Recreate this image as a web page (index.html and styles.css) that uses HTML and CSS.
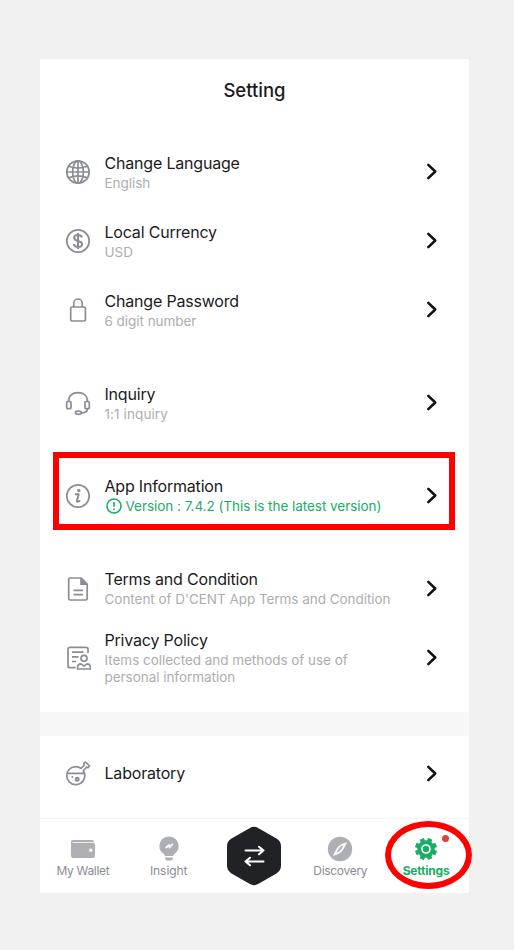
FILE: index.html
```
<!DOCTYPE html>
<html lang="en">
<head>
<meta charset="utf-8">
<title>Setting</title>
<link rel="stylesheet" href="styles.css">
</head>
<body>
<svg class="defs" width="0" height="0">
  <symbol id="chevron" viewBox="0 0 12 18"><path d="M2.300 2.800 9.300 9.500l-7 6.700"/></symbol>
</svg>
<main class="phone">
  <header class="header"><h1>Setting</h1></header>

  <section class="group">
    <div class="row">
      <svg class="icon" viewBox="0 0 26 26"><circle cx="13" cy="13" r="11.200"/><ellipse cx="13" cy="13" rx="5.400" ry="11.200"/><path d="M13 1.800v22.400M1.800 13h22.400M3.500 7.300c5.500 2 13.500 2 19 0M3.500 18.700c5.500-2 13.500-2 19 0"/></svg>
      <div class="text"><h2>Change Language</h2><p>English</p></div>
      <svg class="chevron"><use href="#chevron"/></svg>
    </div>
    <div class="row">
      <svg class="icon" viewBox="0 0 26 26"><circle cx="13" cy="13" r="11.200"/><path class="bold" d="M17 9.500C16.500 7.800 15 7 13 7c-2.300 0-3.900 1-3.900 2.800 0 4.400 8 1.800 8 6.300 0 1.900-1.700 2.900-4.100 2.900-2.300 0-3.900-1-4.200-2.800M13 5v16"/></svg>
      <div class="text"><h2>Local Currency</h2><p>USD</p></div>
      <svg class="chevron"><use href="#chevron"/></svg>
    </div>
    <div class="row">
      <svg class="icon" viewBox="0 0 26 26"><rect x="5.700" y="10" width="14.700" height="14" rx="1.200"/><path d="M8.800 10V6.200a4.200 4.200 0 0 1 8.400 0V10"/></svg>
      <div class="text"><h2>Change Password</h2><p>6 digit number</p></div>
      <svg class="chevron"><use href="#chevron"/></svg>
    </div>
  </section>

  <section class="group">
    <div class="row">
      <svg class="icon" viewBox="0 0 26 26"><path d="M3.500 11.500C3.500 5.700 7.500 2.600 13 2.600s9.500 3.100 9.500 8.900M22.500 18.500c0 3-2 4.200-6 4.400"/><rect x="1.700" y="11.500" width="4.300" height="7.200" rx="1"/><rect x="20" y="11.500" width="4.300" height="7.200" rx="1"/><ellipse cx="13.400" cy="22.800" rx="3" ry="1.600"/></svg>
      <div class="text"><h2>Inquiry</h2><p class="wide">1:1 inquiry</p></div>
      <svg class="chevron"><use href="#chevron"/></svg>
    </div>
  </section>

  <section class="group">
    <div class="row">
      <svg class="icon" viewBox="0 0 26 26"><circle cx="13" cy="13" r="11.200"/><circle class="solid" cx="13.800" cy="7.500" r="1.700"/><path class="bold" d="M10 11.300h3.700l-1.700 6.500c-.3 1.200.7 1.400 3.200-.3"/></svg>
      <div class="text raised"><h2>App Information</h2>
        <p class="version"><svg viewBox="0 0 16 16"><circle cx="8" cy="8" r="7"/><path d="M8 4v4.800M8 10.600v1.500"/></svg><span>Version : 7.4.2 (This is the latest version)</span></p></div>
      <svg class="chevron"><use href="#chevron"/></svg>
    </div>
    <div class="callout-box"></div>
  </section>

  <section class="group">
    <div class="row">
      <svg class="icon" viewBox="0 0 26 26"><path d="M5.200 2h11l6 6v14.500a1.500 1.500 0 0 1-1.500 1.500H5.200a1.500 1.500 0 0 1-1.500-1.500v-19A1.500 1.500 0 0 1 5.200 2zM8.500 14.400h9.500M8.500 18.600h9.500"/><path class="solid" d="M15.200 1.500 23 9h-7.800z"/></svg>
      <div class="text raised"><h2>Terms and Condition</h2><p>Content of D'CENT App Terms and Condition</p></div>
      <svg class="chevron"><use href="#chevron"/></svg>
    </div>
    <div class="row tall">
      <svg class="icon" viewBox="0 0 26 26"><path d="M10.500 22.700H5A2 2 0 0 1 3 20.700V4.300a2 2 0 0 1 2-2h16a2 2 0 0 1 2 2V8M7 7.200h11.500M7 11.800h6.500M7 16.500h4"/><circle cx="19" cy="13.300" r="3"/><path d="M12.500 24v-1.300c0-2.500 1.400-3.800 3.500-3.800l3 2.200 3-2.200c2.100 0 3.500 1.300 3.500 3.800V24z"/></svg>
      <div class="text"><h2>Privacy Policy</h2><p>Items collected and methods of use of<br>personal information</p></div>
      <svg class="chevron"><use href="#chevron"/></svg>
    </div>
  </section>

  <section class="lab">
    <div class="row">
      <svg class="icon" viewBox="0 0 26 26"><path d="M16 7.300 19.400 4 18.800 2.700 20.500 1l4 4-1.500 1.600-1.500-.5-3.200 3.600A9 9 0 1 1 16 7.300zM2.600 12.300h16.600"/><circle class="bold" cx="12.200" cy="18.200" r="1.500"/><circle class="solid" cx="7.300" cy="16" r="1"/></svg>
      <div class="text raised"><h2>Laboratory</h2></div>
      <svg class="chevron"><use href="#chevron"/></svg>
    </div>
  </section>

  <nav class="tabs">
    <div class="tab"><svg viewBox="0 0 26 26"><path d="M3 4h19a2 2 0 0 1 2 2H2.500v.8H23a2 2 0 0 1 2 2V20a2 2 0 0 1-2 2H3a2 2 0 0 1-2-2V6a2 2 0 0 1 2-2z"/><circle class="hole" cx="20.800" cy="14.300" r="1.800"/></svg><span>My Wallet</span></div>
    <div class="tab"><svg viewBox="0 0 26 26"><path d="M13 .5a9.600 9.600 0 0 1 5.700 17.300c-1 .8-1.400 1.400-1.700 2.200H9c-.3-.8-.7-1.400-1.700-2.200A9.600 9.600 0 0 1 13 .5zM9 21.500h8c0 2-1 3.100-2.600 3.100h-2.800C10 24.600 9 23.500 9 21.500z"/><path class="line" d="m9.700 12 3.200-2.700.7 2 3.200-3.500"/></svg><span class="insight">Insight</span></div>
    <div class="tab center"><svg viewBox="0 0 54 60"><path class="hex" d="M22.500 2.200q4.500-2.700 9 0l18 10.400q4.500 2.700 4.500 7.800v19.200q0 5.100-4.500 7.800l-18 10.400q-4.500 2.700-9 0l-18-10.400Q0 44.700 0 39.600V20.400q0-5.100 4.500-7.800z"/><path class="swap" d="M18.500 24.500h17.500M32 20.700l4.500 3.800-4.500 3.800M36.500 35.500H19M23 31.700l-4.500 3.800 4.500 3.800"/></svg></div>
    <div class="tab"><svg viewBox="0 0 26 26"><circle cx="13" cy="13" r="12.200"/><path class="needle" d="M18.500 7.500c-3 .9-6.500 2.800-8 5.500l-3 5.500c3-.9 6.500-2.800 8-5.500z"/></svg><span>Discovery</span></div>
    <div class="tab active"><svg viewBox="0 0 26 26"><g class="gear"><circle cx="13" cy="13" r="8.700"/><path d="M13 1.900v22.200M1.900 13h22.200M5.200 5.200l15.600 15.600M20.800 5.200 5.200 20.800" transform="rotate(22.500 13 13)"/></g><circle class="ring" cx="13" cy="13" r="4"/></svg><span>Settings</span><i class="dot"></i></div>
    <div class="callout-ellipse"></div>
  </nav>
</main>
</body>
</html>
```
FILE: styles.css
```
* { box-sizing: border-box; }
body {
  margin: 0;
  padding: 59px 45px 57px 40px;
  background: #f1f1f1;
  font-family: Inter, "Liberation Sans", sans-serif;
}
h1, h2, p { margin: 0; font-weight: 400; }
.defs { display: block; }
.phone {
  height: 834px;
  display: flex;
  flex-direction: column;
  background: #fff;
}
.header { height: 78px; padding-top: 20px; text-align: center; }
.header h1 { font-size: 18.500px; line-height: 22px; font-weight: 450; color: #1b1b1d; }
.group { position: relative; margin-bottom: 24px; }
.row {
  height: 69px;
  display: grid;
  grid-template-columns: 26px 1fr 12px;
  column-gap: 13.500px;
  align-items: center;
  padding: 0 31px 0 25px;
}
.text { white-space: nowrap; }
.text.raised { padding-bottom: 2px; }
.text h2 { font-size: 16px; line-height: 22px; letter-spacing: -0.190px; color: #1b1b1d; }
.text p { font-size: 13.500px; line-height: 18px; letter-spacing: -0.040px; color: #adadb0; }
.text .wide { letter-spacing: 0.100px; }
.tall .text h2 { line-height: 23px; }
.tall .text p { line-height: 17px; }
.icon { width: 26px; height: 26px; fill: none; stroke: #8b8d96; stroke-width: 1.700; stroke-linejoin: round; }
.icon .bold { stroke-width: 2; }
.icon .solid { fill: #8b8d96; stroke: none; }
.chevron { width: 12px; height: 18px; margin-bottom: 1px; fill: none; stroke: #111; stroke-width: 2.500; stroke-linecap: round; stroke-linejoin: round; }
.text .version { display: flex; align-items: center; gap: 4px; color: #19ae67; padding-left: 1px; }
.version svg { width: 16px; height: 16px; fill: none; stroke: #19ae67; stroke-width: 1.600; }
.callout-box { position: absolute; top: -9px; left: 13px; width: 402px; height: 78px; border: 6px solid #f00; }
.lab { border-top: 24px solid #f7f7f7; margin-top: -4px; height: 106px; padding-top: 3px; }
.tabs {
  position: relative;
  flex: 1;
  display: grid;
  grid-template-columns: repeat(5, 1fr);
  border-top: 1px solid #f3f3f4;
}
.tab { position: relative; display: flex; flex-direction: column; align-items: center; padding-top: 17px; color: #8b8d93; font-size: 12px; line-height: 18px; letter-spacing: -0.300px; }
.tab svg { width: 26px; height: 26px; fill: #aeafb5; }
.tab .insight { letter-spacing: -0.050px; }
.tab svg .hole { fill: #fff; }
.tab .line, .tab .needle { fill: none; stroke: #fff; stroke-width: 1.700; }
.tab.center { padding-top: 7px; }
.tab.center svg { width: 54px; height: 60px; }
.tab .hex { fill: #202226; }
.tab .swap { fill: none; stroke: #fff; stroke-width: 2; stroke-linecap: round; stroke-linejoin: round; }
.tab.active { color: #19ae67; font-weight: 700; letter-spacing: -0.200px; }
.gear { fill: #19ae67; stroke: none; }
.gear path { stroke: #19ae67; stroke-width: 4.600; }
.tab .ring { fill: #19ae67; stroke: #fff; stroke-width: 1.700; }
.dot { position: absolute; top: 16px; left: 59px; width: 7px; height: 7px; border-radius: 50%; background: #d8433c; }
.callout-ellipse { position: absolute; top: 2px; left: 345px; width: 87px; height: 68px; border: 6px solid #f00; border-radius: 50%; }
```
